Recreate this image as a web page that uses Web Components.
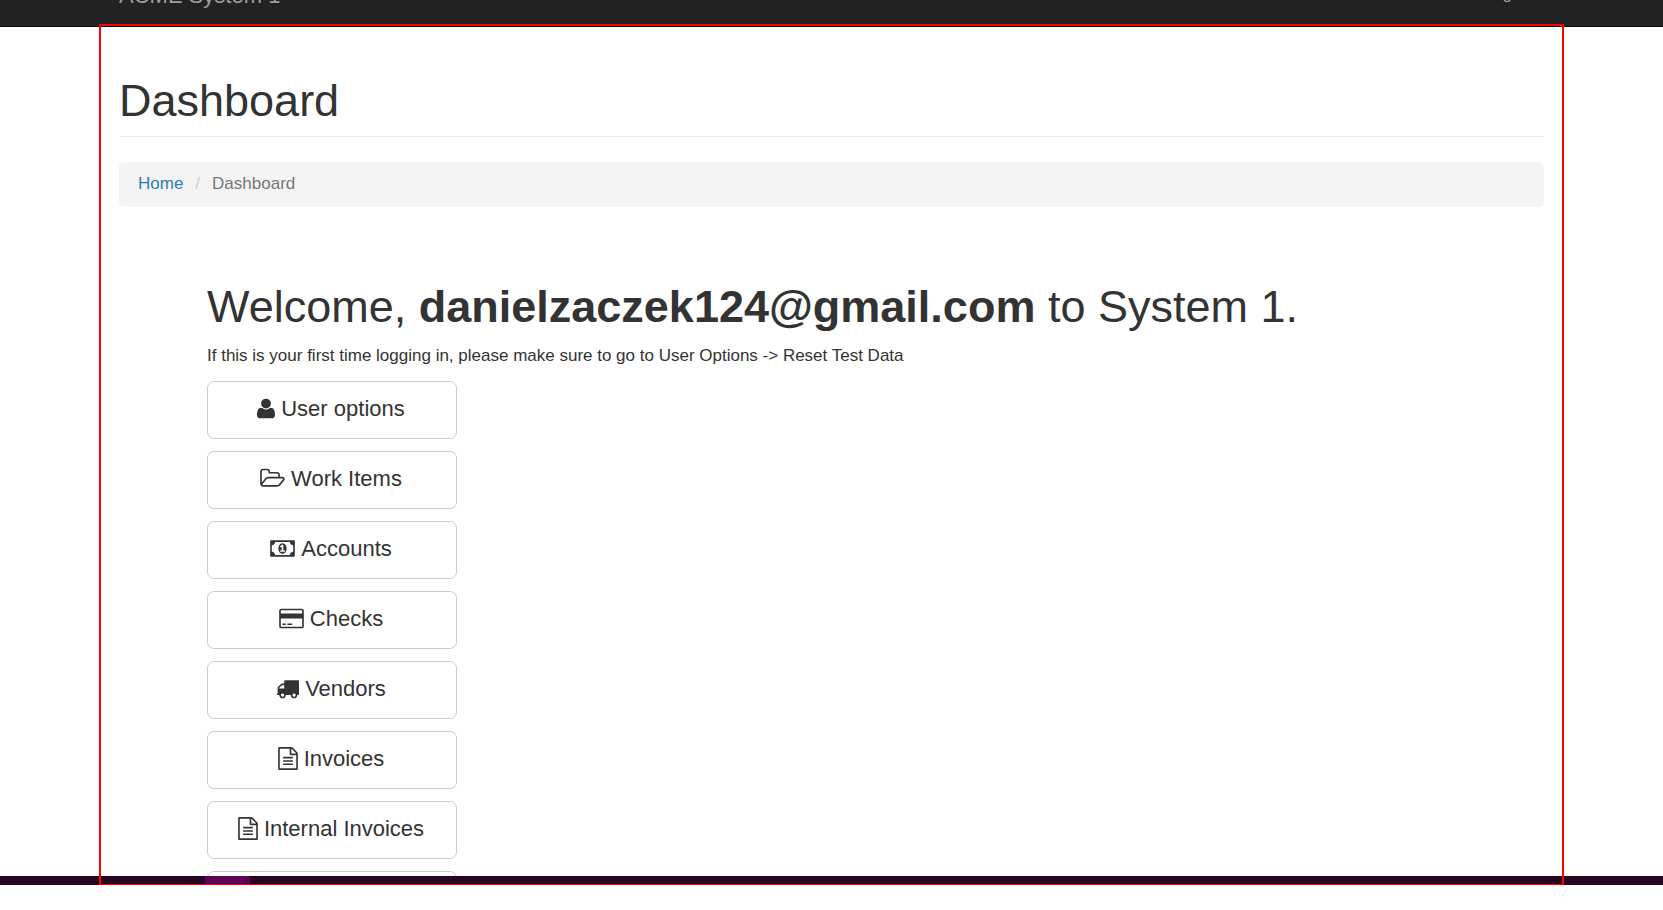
<!DOCTYPE html>
<html lang="en">
<head>
<meta charset="utf-8">
<title>Dashboard - ACME System 1</title>
<style>
  html, body { margin: 0; height: 100%; }
  body { font-family: "Liberation Sans", Arial, sans-serif; font-size: 17px; line-height: 25px; color: #333; background: #fff; overflow: hidden; }
</style>
</head>
<body>
<acme-app></acme-app>

<template id="t-app">
  <style>
    :host { display: flex; flex-direction: column; height: 100vh; box-sizing: border-box; padding-bottom: 25px; }
    .stage { position: relative; flex: 1; min-height: 0; display: flex; flex-direction: column; }
    main { flex: 1; min-height: 0; overflow: hidden; width: 100%; max-width: 1465px; margin: 0 auto; padding: 49px 20px 0; box-sizing: border-box; }
    .panel { padding: 75px 0 0 88px; }
    h1 { margin: 0 0 11px; font-size: 45px; line-height: 50px; font-weight: 400; }
    p { margin: 0 0 13px; }
    nav { display: flex; flex-direction: column; align-items: flex-start; gap: 12px; }
  </style>
  <div class="stage">
    <acme-navbar></acme-navbar>
    <main>
      <page-title>Dashboard</page-title>
      <bread-crumb><a slot="parent" href="#">Home</a>Dashboard</bread-crumb>
      <section class="panel">
        <h1>Welcome, <b>danielzaczek124@gmail.com</b> to System 1.</h1>
        <p>If this is your first time logging in, please make sure to go to User Options -&gt; Reset Test Data</p>
        <nav>
          <menu-button icon="user">User options</menu-button>
          <menu-button icon="folder">Work Items</menu-button>
          <menu-button icon="money">Accounts</menu-button>
          <menu-button icon="card">Checks</menu-button>
          <menu-button icon="truck">Vendors</menu-button>
          <menu-button icon="file">Invoices</menu-button>
          <menu-button icon="file">Internal Invoices</menu-button>
          <menu-button></menu-button>
        </nav>
      </section>
    </main>
    <task-strip></task-strip>
    <focus-frame></focus-frame>
  </div>
</template>

<template id="t-navbar">
  <style>
    :host { display: block; flex: none; height: 27px; overflow: hidden; box-sizing: border-box; background: #222; border-bottom: 1px solid #080808; }
    div { display: flex; justify-content: space-between; align-items: flex-end; height: 26px; max-width: 1465px; box-sizing: border-box; margin: 0 auto; padding: 0 20px; }
    a { color: #9d9d9d; text-decoration: none; line-height: 25px; padding-bottom: 20px; }
    .brand { font-size: 22px; padding-bottom: 18px; }
  </style>
  <div><a class="brand" href="#">ACME System 1</a><a href="#">Log Out</a></div>
</template>

<template id="t-title">
  <style>
    :host { display: block; padding-bottom: 10px; border-bottom: 1px solid #eee; }
    h1 { margin: 0; font-size: 45px; line-height: 50px; font-weight: 400; }
  </style>
  <h1><slot></slot></h1>
</template>

<template id="t-crumb">
  <style>
    :host { display: flex; margin-top: 25px; padding: 9px 19px 11px; background: #f4f4f4; border-radius: 5px; color: #777; }
    ::slotted(a) { color: #337ab7; text-decoration: none; }
    i { font-style: normal; color: #ccc; padding: 0 12px; }
  </style>
  <slot name="parent"></slot><i>/</i><span><slot></slot></span>
</template>

<template id="t-button">
  <style>
    :host { display: block; width: 250px; }
    button { display: flex; justify-content: center; align-items: center; gap: 6px; width: 100%; height: 58px; padding: 0 14px 3px 12px; margin: 0; font: inherit; font-size: 22px; line-height: 30px; color: #333; background: #fff; border: 1px solid #ccc; border-radius: 7px; cursor: pointer; }
    svg { display: block; height: 23px; fill: currentColor; fill-rule: evenodd; }
  </style>
  <button type="button"><svg aria-hidden="true"><path/></svg><span><slot></slot></span></button>
</template>

<template id="t-strip">
  <style>
    :host { display: block; flex: none; height: 9px; background: #28051f; }
    div { height: 8px; max-width: 1465px; margin: 0 auto; }
    span { display: block; width: 45px; height: 8px; margin-left: 106px; background: #5f0053; }
  </style>
  <div><span></span></div>
</template>

<template id="t-frame">
  <style>
    :host { position: absolute; inset: 24px 0 0; display: block; max-width: 1465px; margin: 0 auto; box-sizing: border-box; border: 2px solid #f00; border-bottom-width: 1px; pointer-events: none; }
  </style>
</template>

<script>
  // Glyph outlines: width in pixels, viewBox, path.
  const ICONS = {
    user: [18, "192 0 1408 1792", "M1600 1405q0 120-73 189.5t-194 69.5h-874q-121 0-194-69.5t-73-189.5q0-53 3.5-103.5t14-109 26.5-108.5 43-97.5 62-81 85.5-53.5 111.5-20q9 0 42 21.5t74.5 48 108 48 133.5 21.5 133.5-21.5 108-48 74.5-48 42-21.5q61 0 111.5 20t85.5 53.5 62 81 43 97.5 26.5 108.5 14 109 3.5 103.5zm-320-893q0 159-112.5 271.5t-271.5 112.5-271.5-112.5-112.5-271.5 112.5-271.5 271.5-112.5 271.5 112.5 112.5 271.5z"],
    folder: [25, "64 0 1920 1792", "M1845 931q0-35-53-35h-1088q-40 0-85.5 21.5t-71.5 52.5l-294 363q-18 24-18 40 0 35 53 35h1088q40 0 86-22t71-53l294-363q18-22 18-39zm-1141-163h768v-160q0-40-28-68t-68-28h-576q-40 0-68-28t-28-68v-64q0-40-28-68t-68-28h-320q-40 0-68 28t-28 68v853l256-315q44-53 116-87.5t140-34.5zm1269 163q0 62-46 120l-295 363q-43 53-116 87.5t-140 34.5h-1088q-92 0-158-66t-66-158v-960q0-92 66-158t158-66h320q92 0 158 66t66 158v32h544q92 0 158 66t66 158v160h192q54 0 99 24.5t67 70.5q15 32 15 68z"],
    money: [25, "-64 0 1920 1792", "M704 1152h384v-96h-128v-448h-114l-148 137 77 80q42-37 55-57h2v288h-128v96zm512-256q0 70-21 142t-59.5 134-101.5 101-138 39-138-39-101.5-101-59.5-134-21-142 21-142 59.5-134 101.5-101 138-39 138 39 101.5 101 59.5 134 21 142zm512 256v-512q-106 0-181-75t-75-181h-1152q0 106-75 181t-181 75v512q106 0 181 75t75 181h1152q0-106 75-181t181-75zm128-832v1152q0 26-19 45t-45 19h-1792q-26 0-45-19t-19-45v-1152q0-26 19-45t45-19h1792q26 0 45 19t19 45z"],
    card: [25, "0 0 1920 1792", "M1760 128q66 0 113 47t47 113v1216q0 66-47 113t-113 47h-1600q-66 0-113-47t-47-113v-1216q0-66 47-113t113-47h1600zm-1600 128q-13 0-22.5 9.5t-9.5 22.5v224h1664v-224q0-13-9.5-22.5t-22.5-9.5h-1600zm1600 1280q13 0 22.5-9.5t9.5-22.5v-608h-1664v608q0 13 9.5 22.5t22.5 9.5h1600zm-1504-128v-128h256v128h-256zm384 0v-128h384v128h-384z"],
    truck: [23, "0 0 1792 1792", "M640 1408q0-52-38-90t-90-38-90 38-38 90 38 90 90 38 90-38 38-90zm-384-512h384v-256h-158q-13 0-22 9l-195 195q-9 9-9 22v30zm1280 512q0-52-38-90t-90-38-90 38-38 90 38 90 90 38 90-38 38-90zm256-1088v1024q0 15-4 26.5t-13.5 18.5-16.5 11.5-23.5 6-22.5 2-25.5 0-22.5-.5q0 106-75 181t-181 75-181-75-75-181h-384q0 106-75 181t-181 75-181-75-75-181h-64q-3 0-22.5.5t-25.5 0-22.5-2-23.5-6-16.5-11.5-13.5-18.5-4-26.5q0-26 19-45t45-19v-320q0-8-.5-35t0-38 2.5-34.5 6.5-37 14-30.5 22.5-30l198-198q19-19 50.5-32t58.5-13h160v-192q0-26 19-45t45-19h1024q26 0 45 19t19 45z"],
    file: [20, "128 0 1536 1792", "M1596 380q28 28 48 76t20 88v1152q0 40-28 68t-68 28h-1344q-40 0-68-28t-28-68v-1600q0-40 28-68t68-28h896q40 0 88 20t76 48zm-444-244v376h376q-10-29-22-41l-313-313q-12-12-41-22zm384 1528v-1024h-416q-40 0-68-28t-28-68v-416h-768v1536h1280zm-1024-864q0-14 9-23t23-9h704q14 0 23 9t9 23v64q0 14-9 23t-23 9h-704q-14 0-23-9t-9-23v-64zm736 224q14 0 23 9t9 23v64q0 14-9 23t-23 9h-704q-14 0-23-9t-9-23v-64q0-14 9-23t23-9h704zm0 256q14 0 23 9t9 23v64q0 14-9 23t-23 9h-704q-14 0-23-9t-9-23v-64q0-14 9-23t23-9h704z"]
  };

  const define = (name, templateId, setup) => customElements.define(name, class extends HTMLElement {
    connectedCallback() {
      if (this.shadowRoot) return;
      const root = this.attachShadow({ mode: "open" });
      root.append(document.getElementById(templateId).content.cloneNode(true));
      if (setup) setup(this, root);
    }
  });

  define("acme-navbar", "t-navbar");
  define("page-title", "t-title");
  define("bread-crumb", "t-crumb");
  define("task-strip", "t-strip");
  define("focus-frame", "t-frame");
  define("menu-button", "t-button", (host, root) => {
    const svg = root.querySelector("svg");
    const icon = ICONS[host.getAttribute("icon")];
    if (!icon) { svg.remove(); return; }
    svg.style.width = icon[0] + "px";
    svg.setAttribute("viewBox", icon[1]);
    svg.firstElementChild.setAttribute("d", icon[2]);
  });
  define("acme-app", "t-app");
</script>
</body>
</html>
